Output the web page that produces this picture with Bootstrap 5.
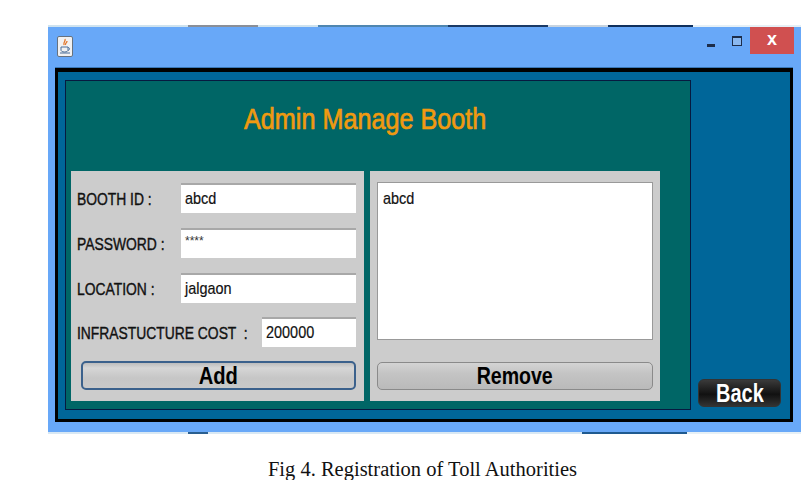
<!DOCTYPE html>
<html lang="en"><head><meta charset="utf-8"><title>Admin Manage Booth</title>
<link rel="stylesheet" href="https://cdn.jsdelivr.net/npm/bootstrap@5.3.0/dist/css/bootstrap.min.css">
<style>
html,body{margin:0;background:#fff;height:480px;overflow:hidden}
body{font-family:"Liberation Sans",Arial,sans-serif}
.shot{padding:25px 0 0 48px}
.edge{height:2px;background:#cfe3ef}
.edge span{display:block;height:2px}
.e1{width:140px;background:#cfe3ef}.e2{width:70px;background:#8a8f98}.e3{width:60px;background:#cfe3ef}.e4{width:130px;background:#4f86b0}.e5{width:100px;background:#1b3a66}.e6{width:60px;background:#c8d4e0}.e7{width:85px;background:#10305c}.e8{flex:1;background:#e6f0f6}
.b1{width:140px;background:#d8e8f4}.b2{width:20px;background:#2a5f90}.b3{width:374px;background:#d8e8f4}.b4{width:105px;background:#1f5a90}
.win{background:#68a8f8;height:405px}
.capbar{height:41px;padding-left:9px}
.javaicon{width:16px;height:21px;margin-top:9px}
.winctl{width:44px;height:27px;background:#d05050;color:#fff;margin-right:7px;font-size:18px;font-weight:700;line-height:25px;text-align:center}
.minb{width:8px;height:3px;background:#1d2d4a;margin:17px 17px 0 0}
.maxb{width:10px;height:10px;border:1px solid #1d2d4a;border-top-width:2px;background:#8ab8f0;margin:9px 8px 0 0}
.frame{margin-left:7px;margin-right:8px;height:354px;background:#006699;border:3px solid #000;border-top-width:4px;box-shadow:0 -1px 0 #3a78b8;padding:8px 0 9px 7px}
.tealbox{width:627px;height:330px;background:#006666;border:1px solid #061a40;padding:0 30px 7px 5px}
.headline{height:90px;font-size:30px;color:#f09a10;padding-left:173px;padding-top:20px;line-height:36px;white-space:nowrap}
.sq{display:inline-block;transform-origin:left center;white-space:nowrap}
.sq-title{transform:scaleX(.84);-webkit-text-stroke:.7px #f09a10}
.sq-lab{transform:scaleX(.815);font-size:17px;color:#111;-webkit-text-stroke:.4px #111}
.sq-val{transform:scaleX(.85);font-size:17px;color:#111;-webkit-text-stroke:.2px #111}
.graybox{background:#ccc;height:230px}
.leftbox{width:293px;padding:12px 8px 0 6px}
.rightbox{width:290px;margin-left:6px;padding:11px 7px 0 7px}
.line{height:30px}
.line+.line{margin-top:15px}
.line.tight{margin-top:14px}
.capt{width:104px;flex:none;padding-top:3px}
.capt.wide{width:185px}
.fieldx.form-control{border:0;border-top:2px solid #a8a8a8;border-radius:0;height:30px;padding:1px 4px 0;flex:1;min-width:0;font-size:17px;line-height:26px;background:#fff;box-shadow:none;overflow:hidden}
.fieldx.stars{font-size:12px;color:#333;line-height:20px}
.addb.btn,.remb.btn{height:29px;padding:0;border-radius:5px;color:#000;font-weight:700;line-height:26px}
.addb.btn{display:block;width:275px;margin:14px 0 0 4px;border:2px solid #3b618c;background:linear-gradient(#bdbdbd,#d6d6d6 20%,#c6c6c6 60%,#c9c9c9);font-size:24px}
.remb.btn{display:block;width:276px;margin-top:22px;border:1px solid #8a8a8a;background:linear-gradient(#d4d4d4,#c4c4c4 40%,#bababa);font-size:24px;height:28px}
.listx.form-control{height:158px;border:1px solid #999;border-radius:0;padding:3px 5px;font-size:17px;background:#fff;box-shadow:none}
.sidecol{width:102px;padding:299px 0 0 7px}
.backb.btn{width:83px;height:28px;padding:0;border:1px solid #333;border-radius:6px;background:linear-gradient(#3a3a3a,#111 55%,#333);color:#fff;font-weight:700;font-size:25px;line-height:26px}
.sq-btn{transform-origin:center;transform:scaleX(.84)}
.sq-rem{transform:scaleX(.815)}
.sq-back{transform:scaleX(.8)}
.figcap{font-family:"Liberation Serif","Times New Roman",serif;font-size:20.500px;color:#111;text-align:center;margin:24px 0 0 44px;line-height:22px}
</style></head><body>
<div class="shot">
 <div class="edge d-flex"><span class="e1"></span><span class="e2"></span><span class="e3"></span><span class="e4"></span><span class="e5"></span><span class="e6"></span><span class="e7"></span><span class="e8"></span></div>
 <div class="win">
  <div class="capbar d-flex">
   <svg class="javaicon" viewBox="0 0 16 21"><rect x=".5" y=".5" width="15" height="20" rx="1.5" fill="#f1f1f1" stroke="#67727e"/><path d="M8 3c1 2-2 3-1 6M10 5c0 2-2 2-1.500 4" fill="none" stroke="#e2762a" stroke-width="1.300"/><path d="M4 11h7v3c0 1-1 2-3.500 2S4 15 4 14zM11 11.500c2 0 2 2.500 0 3M3 17h10" fill="none" stroke="#4a6f9a" stroke-width="1"/></svg>
   <div class="ms-auto d-flex"><div class="minb"></div><div class="maxb"></div><div class="winctl">x</div></div>
  </div>
  <div class="frame d-flex">
   <div class="tealbox">
    <div class="headline"><span class="sq sq-title">Admin Manage Booth</span></div>
    <div class="d-flex">
     <div class="graybox leftbox">
      <div class="line d-flex align-items-center"><div class="capt"><span class="sq sq-lab">BOOTH ID :</span></div><div class="form-control fieldx"><span class="sq sq-val">abcd</span></div></div>
      <div class="line d-flex align-items-center"><div class="capt"><span class="sq sq-lab">PASSWORD :</span></div><div class="form-control fieldx stars">****</div></div>
      <div class="line d-flex align-items-center"><div class="capt"><span class="sq sq-lab">LOCATION :</span></div><div class="form-control fieldx"><span class="sq sq-val">jalgaon</span></div></div>
      <div class="line tight d-flex align-items-center"><div class="capt wide"><span class="sq sq-lab">INFRASTUCTURE COST &nbsp;:</span></div><div class="form-control fieldx"><span class="sq sq-val">200000</span></div></div>
      <button class="btn addb"><span class="sq sq-btn">Add</span></button>
     </div>
     <div class="graybox rightbox">
      <div class="form-control listx"><span class="sq sq-val">abcd</span></div>
      <button class="btn remb"><span class="sq sq-btn sq-rem">Remove</span></button>
     </div>
    </div>
   </div>
   <div class="sidecol"><button class="btn backb"><span class="sq sq-btn sq-back">Back</span></button></div>
  </div>
 </div>
 <div class="edge d-flex"><span class="b1"></span><span class="b2"></span><span class="b3"></span><span class="b4"></span><span class="e8"></span></div>
</div>
<div class="figcap">Fig 4. Registration of Toll Authorities</div>
</body></html>
